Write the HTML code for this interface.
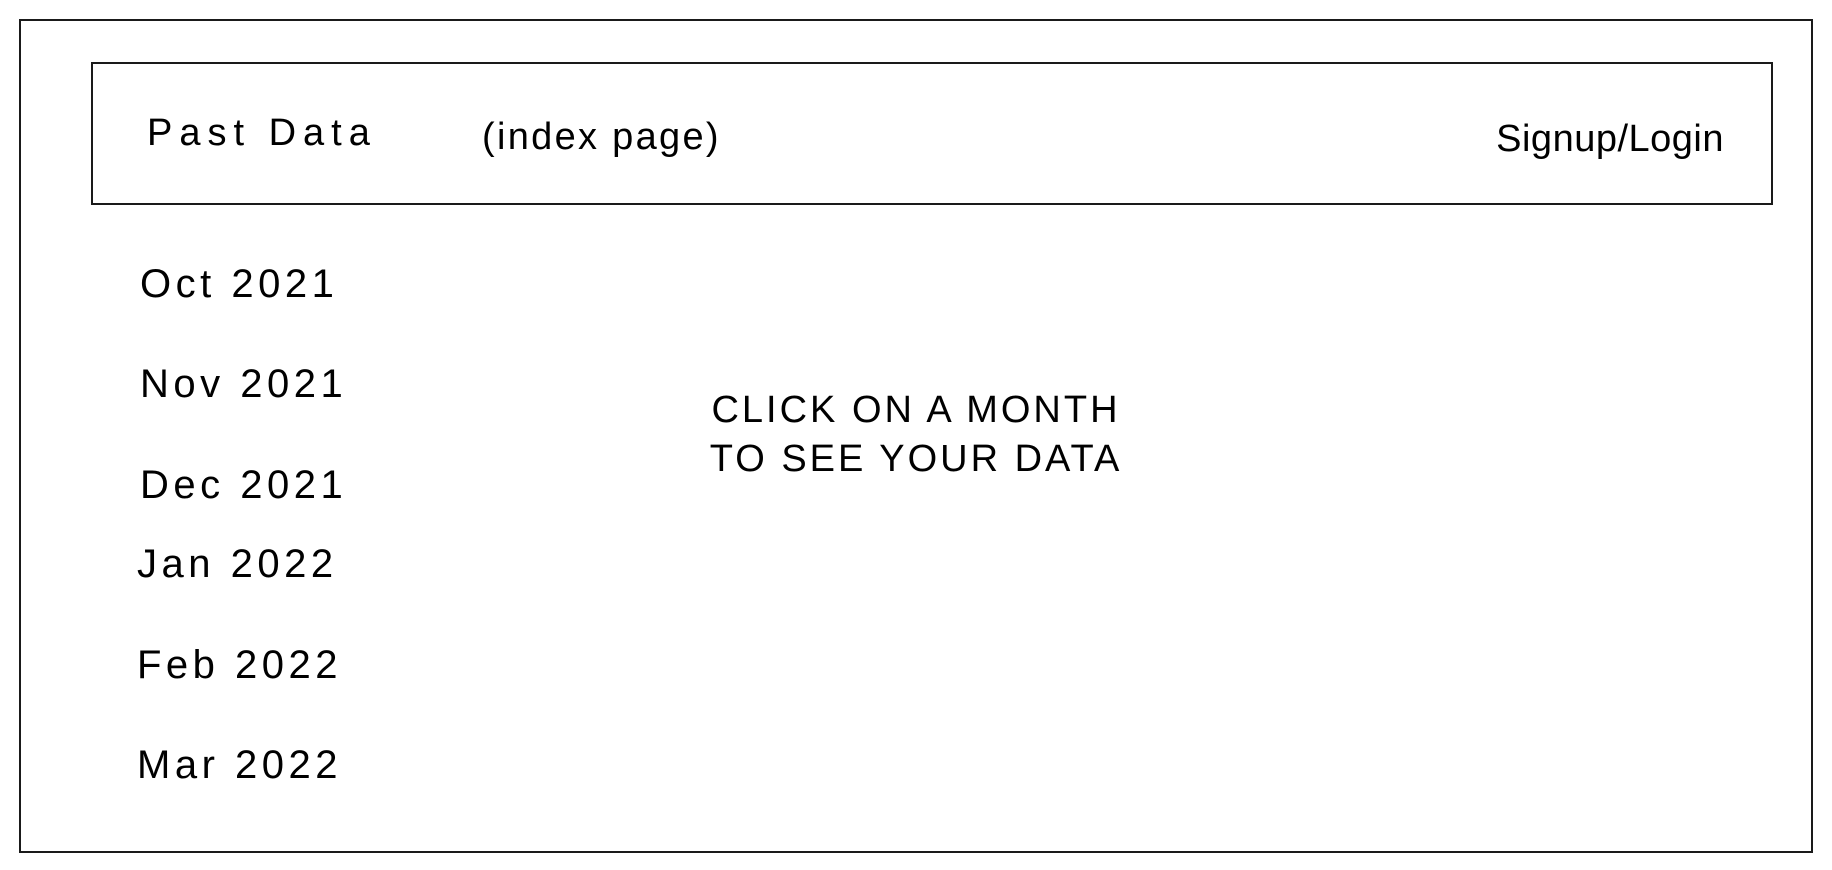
<!DOCTYPE html>
<html><head><meta charset="utf-8"><style>
body{margin:0;width:1832px;height:870px;background:#fff;position:relative;overflow:hidden;font-family:"Liberation Sans",sans-serif;color:#000}
.r{position:absolute;border:2px solid #1a1a1a}
.t{position:absolute;font-size:38px;line-height:1;white-space:nowrap}
.m{position:absolute;left:140px;font-size:40px;line-height:1;white-space:nowrap;letter-spacing:4.5px}
.c{position:absolute;left:0;width:1832px;text-align:center;font-size:38px;letter-spacing:3px;line-height:1}
</style></head><body>
<div class="r" style="left:19px;top:19px;width:1790px;height:830px"></div>
<div class="r" style="left:91px;top:62px;width:1678px;height:139px"></div>
<div class="t" style="left:147px;top:114px;letter-spacing:7px">Past Data</div>
<div class="t" style="left:482px;top:118px;letter-spacing:2.3px">(index page)</div>
<div class="t" style="right:108px;top:120px;letter-spacing:0.5px">Signup/Login</div>
<div class="m" style="top:264px">Oct 2021</div>
<div class="m" style="top:364px">Nov 2021</div>
<div class="m" style="top:465px">Dec 2021</div>
<div class="m" style="top:544px;left:137px">Jan 2022</div>
<div class="m" style="top:645px;left:137px">Feb 2022</div>
<div class="m" style="top:745px;left:137px">Mar 2022</div>
<div class="c" style="top:391px">CLICK ON A MONTH</div>
<div class="c" style="top:440px">TO SEE YOUR DATA</div>
</body></html>
